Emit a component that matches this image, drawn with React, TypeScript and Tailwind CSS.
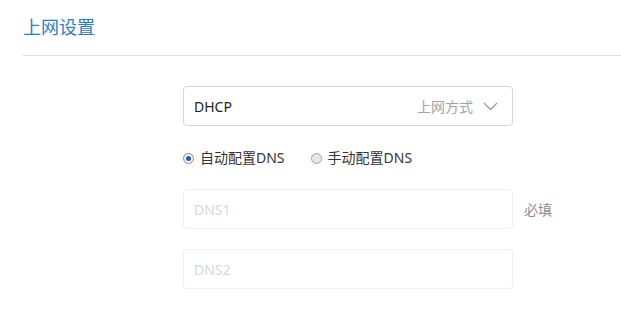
import { useState } from 'react';

const font = { fontFamily: '"Noto Sans", "Noto Sans CJK SC", sans-serif' };

function Radio({ checked, label, onClick }: { checked: boolean; label: string; onClick: () => void }) {
  return (
    <button type="button" onClick={onClick} className="flex items-center gap-[6px] text-[14px] leading-[20px] text-[#333]">
      <span
        className={`flex h-[11px] w-[11px] items-center justify-center rounded-full border ${
          checked ? 'border-[#8a8a8a] bg-[#f2f2f2]' : 'border-[#a0a0a0] bg-[#e6e6e6]'
        }`}
      >
        {checked && <span className="h-[5px] w-[5px] rounded-full bg-[#1d5fa8]" />}
      </span>
      {label}
    </button>
  );
}

export default function App() {
  const [mode, setMode] = useState<'auto' | 'manual'>('auto');

  return (
    <div className="h-[309px] w-[621px] bg-white" style={font}>
      {/* Header */}
      <div className="pl-[23px] pt-[14px]">
        <h1 className="text-[18px] leading-[26px] text-[#2a7ccc]">上网设置</h1>
        <div className="mt-[15px] h-px bg-[#dcdcdc]" />
      </div>

      <div className="flex flex-col pl-[183px] pt-[30px]">
        {/* WAN type select */}
        <div className="flex h-[40px] w-[330px] items-center justify-between rounded-[4px] border border-[#d6d6d6] pl-[10px] pr-[14px]">
          <span className="text-[14px] font-normal text-[#222]">DHCP</span>
          <div className="flex items-center gap-[10px]">
            <span className="text-[14px] text-[#a3a3a3]">上网方式</span>
            <svg width="15" height="9" viewBox="0 0 15 9" fill="none">
              <path d="M1 1l6.5 6.5L14 1" stroke="#9a9a9a" strokeWidth="1.3" />
            </svg>
          </div>
        </div>

        {/* DNS mode */}
        <div className="mt-[22px] flex items-center gap-[26px]">
          <Radio checked={mode === 'auto'} label="自动配置DNS" onClick={() => setMode('auto')} />
          <Radio checked={mode === 'manual'} label="手动配置DNS" onClick={() => setMode('manual')} />
        </div>

        <div className="mt-[21px] flex items-center gap-[11px]">
          <input
            disabled={mode === 'auto'}
            placeholder="DNS1"
            className="h-[40px] w-[330px] rounded-[4px] border border-[#efefef] bg-white px-[10px] text-[14px] placeholder:text-[#d8d8d8]"
          />
          <span className="text-[14px] text-[#8c8c8c]">必填</span>
        </div>

        <input
          disabled={mode === 'auto'}
          placeholder="DNS2"
          className="mt-[20px] h-[40px] w-[330px] rounded-[4px] border border-[#efefef] bg-white px-[10px] text-[14px] placeholder:text-[#d8d8d8]"
        />
      </div>
    </div>
  );
}
